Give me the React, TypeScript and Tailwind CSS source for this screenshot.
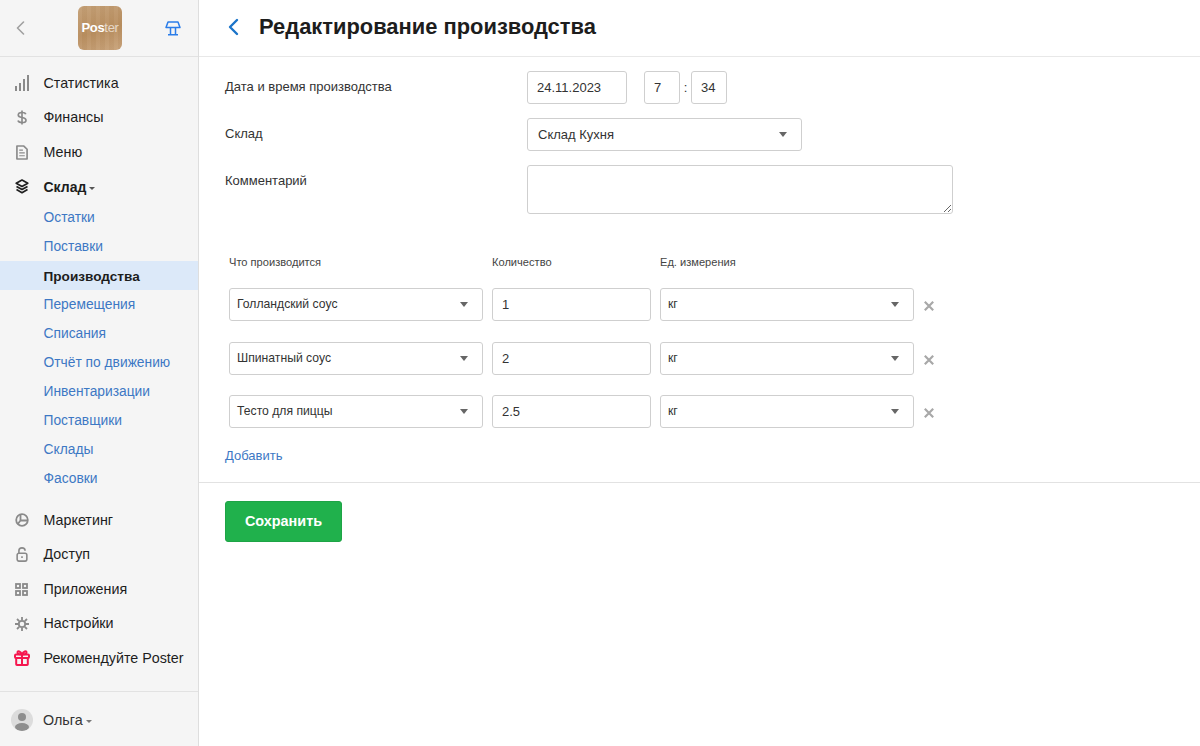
import React from "react";

const g = "#8a8a8a";

const IconStats = () => (
  <svg width="14" height="17" viewBox="0 0 14 17" fill={g}>
    <rect x="0" y="11" width="2" height="5" />
    <rect x="4" y="8" width="2" height="8" />
    <rect x="8" y="4" width="2" height="12" />
    <rect x="12" y="0" width="2" height="16" />
  </svg>
);
const IconDollar = () => (
  <svg width="10" height="15" viewBox="0 0 12 18" fill="none" stroke={g} strokeWidth="2">
    <path d="M10.500 5C10 3.500 8.300 3 6 3 3.500 3 1.500 4 1.500 6s2 2.600 4.500 3 4.800 1 4.800 3.200S8.600 15 6 15c-2.400 0-4.300-.8-4.800-2.400" />
    <path d="M6 .5v17" />
  </svg>
);
const IconDoc = () => (
  <svg width="12" height="15" viewBox="0 0 13 16" fill="none" stroke={g} strokeWidth="1.800">
    <path d="M1 1h7.500L12 4.500V15H1z" strokeLinejoin="round" />
    <path d="M3.500 5.500h4M3.500 8.500h6M3.500 11.500h6" strokeWidth="1.300" />
  </svg>
);
const IconLayers = () => (
  <svg width="14" height="15" viewBox="0 0 14 15" fill="none" stroke="#1f1f1f" strokeWidth="1.700" strokeLinejoin="round">
    <path d="M7 1l5.800 3.200L7 7.400 1.200 4.200z" />
    <path d="M1.500 7.400L7 10.500l5.500-3.100" />
    <path d="M1.500 10.600L7 13.700l5.500-3.100" />
  </svg>
);
const IconMarketing = () => (
  <svg width="14" height="14" viewBox="0 0 14 14" fill="none" stroke={g} strokeWidth="1.800">
    <circle cx="7" cy="7" r="5.800" />
    <path d="M5.500 1.500V7.500L2.800 11M5.500 7.500H12.500" />
  </svg>
);
const IconLock = () => (
  <svg width="12" height="15" viewBox="0 0 13 17" fill="none" stroke={g} strokeWidth="1.800">
    <path d="M3 7V4.200C3 2.300 4.500 1 6.500 1S10 2.300 10 4.200" />
    <rect x="1" y="7" width="11" height="9" rx="2" />
    <path d="M6.500 10.500v2" />
  </svg>
);
const IconApps = () => (
  <svg width="13" height="13" viewBox="0 0 13 13" fill="none" stroke={g} strokeWidth="1.800">
    <rect x="1" y="1" width="4" height="4" />
    <rect x="8" y="1" width="4" height="4" />
    <rect x="1" y="8" width="4" height="4" />
    <rect x="8" y="8" width="4" height="4" />
  </svg>
);
const IconGear = () => (
  <svg width="14" height="14" viewBox="0 0 14 14" fill="none" stroke={g} strokeWidth="1.800">
    <circle cx="7" cy="7" r="3.200" />
    <path d="M7 0v3M7 11v3M0 7h3M11 7h3M2 2l2.200 2.200M9.800 9.800L12 12M12 2L9.800 4.200M4.200 9.800L2 12" />
  </svg>
);
const IconGift = () => (
  <svg width="16" height="16" viewBox="0 0 16 16" fill="none" stroke="#f5174f" strokeWidth="2" strokeLinejoin="round">
    <rect x="1" y="4.500" width="14" height="3.500" rx="1" />
    <path d="M2.200 8v6.200a.8.8 0 0 0 .8.8h10a.8.8 0 0 0 .8-.8V8M8 4.500V15" />
    <path d="M8 4.500C6.500 1 3.500.500 3.500 2.500 3.500 4 6 4.500 8 4.500zM8 4.500C9.500 1 12.500.500 12.500 2.500 12.500 4 10 4.500 8 4.500z" />
  </svg>
);

const Row = ({ icon, label, bold, caret, mt }: { icon: React.ReactNode; label: string; bold?: boolean; caret?: boolean; mt?: string }) => (
  <div className={`flex h-[34.5px] items-center ${mt ?? ""}`}>
    <span className="flex w-[43.5px] shrink-0 justify-center">{icon}</span>
    <span className={`text-[#1d1d1d] ${bold ? "pt-[2px] text-[14px] font-bold" : "text-[14.3px]"}`}>{label}</span>
    {caret && <span className="ml-[3px] mt-[3px] h-0 w-0 border-x-[3px] border-t-[3px] border-x-transparent border-t-[#555]" />}
  </div>
);

const Sub = ({ label, active }: { label: string; active?: boolean }) => (
  <div className={`flex h-[29px] items-center pl-[43.5px] ${active ? "bg-[#dce9f9] pt-[3px] text-[13.6px] font-bold text-[#1d1d1d]" : "pt-[2px] text-[13.8px] text-[#3d78c4]"}`}>{label}</div>
);

const Caret = () => <span className="h-0 w-0 border-x-[4px] border-t-[5px] border-x-transparent border-t-[#666]" />;

const Select = ({ label, w, small }: { label: string; w: string; small?: boolean }) => (
  <div className={`flex h-[33px] items-center justify-between rounded-[3px] border border-[#cfcfcf] bg-white ${w} ${small ? "pl-[7px] pr-[14px] text-[12.2px]" : "pl-[10px] pr-[14px] text-[13px]"} text-[#333]`}>
    <span>{label}</span>
    <Caret />
  </div>
);

const Field = ({ value, w }: { value: string; w: string }) => (
  <input
    readOnly
    value={value}
    className={`h-[33px] rounded-[3px] border border-[#cfcfcf] bg-white pl-[9px] text-[13px] text-[#333] outline-none ${w}`}
  />
);

const items = [
  ["Голландский соус", "1", "mt-[17px]"],
  ["Шпинатный соус", "2", "mt-[21px]"],
  ["Тесто для пиццы", "2.5", "mt-[20px]"],
];

export default function App() {
  return (
    <div className="flex h-[746px] w-[1200px] overflow-hidden bg-white font-['Liberation_Sans',Arial,sans-serif]">
      <aside className="flex w-[199px] shrink-0 flex-col border-r border-[#dedede] bg-[#f5f5f5]">
        <div className="flex h-[57px] shrink-0 items-center border-b border-[#e2e2e2] pl-[16px] pr-[17px]">
          <svg width="9" height="14" viewBox="0 0 9 14" fill="none" stroke="#a0a0a0" strokeWidth="1.600" strokeLinecap="round" strokeLinejoin="round">
            <path d="M7.500 1L1.500 7l6 6" />
          </svg>
          <div className="ml-[53px] flex h-[44px] w-[44px] items-center justify-center rounded-[6px] bg-[repeating-linear-gradient(90deg,rgba(255,255,255,0.03)_0px,rgba(255,255,255,0.03)_4px,rgba(90,50,10,0.03)_4px,rgba(90,50,10,0.03)_9px),linear-gradient(165deg,#c4a077,#b98f60_55%,#c9a47c)] text-[13px] tracking-[-0.3px] text-white">
            <span className="font-bold">Pos</span><span className="text-white/65">ter</span>
          </div>
          <svg className="ml-auto" width="16" height="15" viewBox="0 0 16 15" fill="none" stroke="#2b7de9" strokeWidth="1.500" strokeLinejoin="round">
            <path d="M3 1h10l2 5.500H1z" />
            <path d="M5.500 6.500V13M10.500 6.500V13M3 13.800h10" />
          </svg>
        </div>
        <nav className="flex flex-1 flex-col pt-[9px]">
          <Row icon={<IconStats />} label="Статистика" />
          <Row icon={<IconDollar />} label="Финансы" />
          <Row icon={<IconDoc />} label="Меню" />
          <Row icon={<IconLayers />} label="Склад" bold caret />
          <div className="-mt-[1px]">
            <Sub label="Остатки" />
            <Sub label="Поставки" />
            <Sub label="Производства" active />
            <Sub label="Перемещения" />
            <Sub label="Списания" />
            <Sub label="Отчёт по движению" />
            <Sub label="Инвентаризации" />
            <Sub label="Поставщики" />
            <Sub label="Склады" />
            <Sub label="Фасовки" />
          </div>
          <Row icon={<IconMarketing />} label="Маркетинг" mt="mt-[10px]" />
          <Row icon={<IconLock />} label="Доступ" />
          <Row icon={<IconApps />} label="Приложения" />
          <Row icon={<IconGear />} label="Настройки" />
          <Row icon={<IconGift />} label="Рекомендуйте Poster" />
        </nav>
        <div className="flex h-[55px] shrink-0 items-center border-t border-[#e2e2e2] pl-[11px] pt-[2px]">
          <span className="flex h-[22px] w-[22px] items-center justify-center overflow-hidden rounded-full bg-[#dcdcdc]">
            <svg width="22" height="22" viewBox="0 0 22 22" fill="#8e8e8e">
              <circle cx="11" cy="8" r="4" />
              <ellipse cx="11" cy="18" rx="7" ry="4" />
            </svg>
          </span>
          <span className="ml-[10px] pt-[2px] text-[14.3px] text-[#333]">Ольга</span>
          <span className="ml-[3px] mt-[2px] h-0 w-0 border-x-[3px] border-t-[3px] border-x-transparent border-t-[#777]" />
        </div>
      </aside>

      <main className="flex min-w-0 flex-1 flex-col">
        <header className="flex h-[57px] shrink-0 items-center border-b border-[#e8e8e8] pb-[3px] pl-[28px]">
          <svg width="12" height="18" viewBox="0 0 12 18" fill="none" stroke="#1b74c9" strokeWidth="2.400" strokeLinecap="round" strokeLinejoin="round">
            <path d="M10 2L3 9l7 7" />
          </svg>
          <h1 className="ml-[20px] text-[21.9px] font-bold leading-none text-[#1d1d1d]">Редактирование производства</h1>
        </header>

        <section className="pl-[26px] pt-[14px]">
          <div className="flex h-[47px] items-start">
            <label className="w-[302px] pt-[6px] text-[13px] text-[#333]">Дата и время производства</label>
            <Field value="24.11.2023" w="w-[100px]" />
            <span className="w-[17px]" />
            <Field value="7" w="w-[36px]" />
            <span className="w-[11px] pt-[7px] text-center text-[13px] text-[#333]">:</span>
            <Field value="34" w="w-[36px]" />
          </div>
          <div className="flex h-[47px] items-start">
            <label className="w-[302px] pt-[6px] text-[13px] text-[#333]">Склад</label>
            <Select label="Склад Кухня" w="w-[275px]" />
          </div>
          <div className="flex items-start">
            <label className="w-[302px] pt-[6px] text-[13px] text-[#333]">Комментарий</label>
            <textarea readOnly className="h-[49px] w-[426px] rounded-[3px] border border-[#cfcfcf] bg-white outline-none" />
          </div>
        </section>

        <section className="pl-[30px] pt-[40px]">
          <div className="flex text-[11.1px] text-[#444]">
            <span className="w-[263px]">Что производится</span>
            <span className="w-[168px]">Количество</span>
            <span>Ед. измерения</span>
          </div>
          <div className="flex flex-col">
            {items.map(([name, qty, gap]) => (
              <div key={name} className={`flex items-center ${gap}`}>
                <Select label={name} w="w-[254px]" small />
                <span className="w-[9px]" />
                <Field value={qty} w="w-[159px]" />
                <span className="w-[9px]" />
                <Select label="кг" w="w-[254px]" small />
                <svg className="ml-[10px] mt-[3px]" width="10" height="10" viewBox="0 0 10 10" stroke="#a8a8a8" strokeWidth="2.200">
                  <path d="M0.800 0.800l8.400 8.400M9.200 0.800L0.800 9.200" />
                </svg>
              </div>
            ))}
          </div>
        </section>

        <div className="pl-[26px] pt-[19px] text-[13px] leading-[17px] text-[#3d78c4]">Добавить</div>
        <div className="mt-[18px] border-t border-[#e2e2e2] pl-[26px] pt-[18px]">
          <button className="h-[41px] w-[117px] rounded-[3px] border border-[#1ea446] bg-[#20b14c] pt-[2px] text-[14.4px] font-bold text-white">Сохранить</button>
        </div>
      </main>
    </div>
  );
}
